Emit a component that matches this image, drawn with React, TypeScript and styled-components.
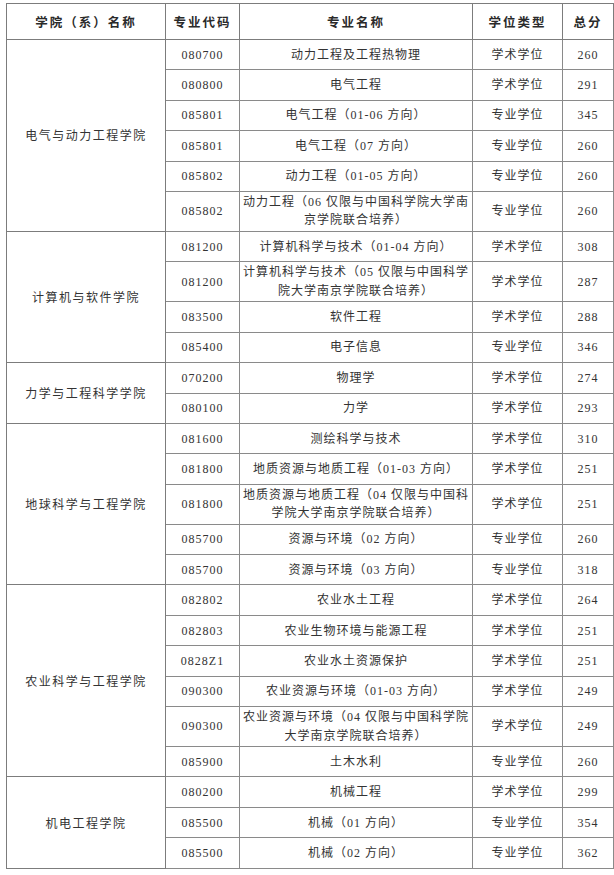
import React from "react";
import styled, { createGlobalStyle } from "styled-components";

interface Major {
    code: string;
    name: React.ReactNode;
    degree: string;
    score: number;
    tall?: boolean;
}

interface School {
    name: string;
    majors: Major[];
}

const schools: School[] = [
    {
        name: "电气与动力工程学院",
        majors: [
            { code: "080700", name: "动力工程及工程热物理", degree: "学术学位", score: 260 },
            { code: "080800", name: "电气工程", degree: "学术学位", score: 291 },
            { code: "085801", name: "电气工程（01-06 方向）", degree: "专业学位", score: 345 },
            { code: "085801", name: "电气工程（07 方向）", degree: "专业学位", score: 260 },
            { code: "085802", name: "动力工程（01-05 方向）", degree: "专业学位", score: 260 },
            {
                code: "085802",
                name: <>动力工程（06 仅限与中国科学院大学南<br />京学院联合培养）</>,
                degree: "专业学位",
                score: 260,
                tall: true,
            },
        ],
    },
    {
        name: "计算机与软件学院",
        majors: [
            { code: "081200", name: "计算机科学与技术（01-04 方向）", degree: "学术学位", score: 308 },
            {
                code: "081200",
                name: <>计算机科学与技术（05 仅限与中国科学<br />院大学南京学院联合培养）</>,
                degree: "学术学位",
                score: 287,
                tall: true,
            },
            { code: "083500", name: "软件工程", degree: "学术学位", score: 288 },
            { code: "085400", name: "电子信息", degree: "专业学位", score: 346 },
        ],
    },
    {
        name: "力学与工程科学学院",
        majors: [
            { code: "070200", name: "物理学", degree: "学术学位", score: 274 },
            { code: "080100", name: "力学", degree: "学术学位", score: 293 },
        ],
    },
    {
        name: "地球科学与工程学院",
        majors: [
            { code: "081600", name: "测绘科学与技术", degree: "学术学位", score: 310 },
            { code: "081800", name: "地质资源与地质工程（01-03 方向）", degree: "学术学位", score: 251 },
            {
                code: "081800",
                name: <>地质资源与地质工程（04 仅限与中国科<br />学院大学南京学院联合培养）</>,
                degree: "学术学位",
                score: 251,
                tall: true,
            },
            { code: "085700", name: "资源与环境（02 方向）", degree: "专业学位", score: 260 },
            { code: "085700", name: "资源与环境（03 方向）", degree: "专业学位", score: 318 },
        ],
    },
    {
        name: "农业科学与工程学院",
        majors: [
            { code: "082802", name: "农业水土工程", degree: "学术学位", score: 264 },
            { code: "082803", name: "农业生物环境与能源工程", degree: "学术学位", score: 251 },
            { code: "0828Z1", name: "农业水土资源保护", degree: "学术学位", score: 251 },
            { code: "090300", name: "农业资源与环境（01-03 方向）", degree: "学术学位", score: 249 },
            {
                code: "090300",
                name: <>农业资源与环境（04 仅限与中国科学院<br />大学南京学院联合培养）</>,
                degree: "学术学位",
                score: 249,
                tall: true,
            },
            { code: "085900", name: "土木水利", degree: "专业学位", score: 260 },
        ],
    },
    {
        name: "机电工程学院",
        majors: [
            { code: "080200", name: "机械工程", degree: "学术学位", score: 299 },
            { code: "085500", name: "机械（01 方向）", degree: "专业学位", score: 354 },
            { code: "085500", name: "机械（02 方向）", degree: "专业学位", score: 362 },
        ],
    },
];

const GlobalStyle = createGlobalStyle`
  body {
    margin: 0;
    background: #ffffff;
    font-family: "Liberation Serif", "Noto Sans CJK SC", serif;
  }
`;

const Page = styled.div`
  padding: 3px 1px 0 6px;
`;

const Table = styled.table`
  border-collapse: collapse;
  table-layout: fixed;
  width: 607px;
  color: #333333;
  font-size: 12px;
  letter-spacing: 1px;
`;

const Col = styled.col<{ $w: number }>`
  width: ${(p) => p.$w}px;
`;

const HeadCell = styled.th`
  height: 35px;
  border: 1px solid #7c7c7c;
  font-weight: 700;
  font-size: 12.5px;
  letter-spacing: 2px;
  color: #2a2a2a;
  text-align: center;
  vertical-align: middle;
  padding: 0;
`;

const Cell = styled.td<{ $tall?: boolean }>`
  height: ${(p) => (p.$tall ? 39 : 29.4)}px;
  border: 1px solid #8a8a8a;
  text-align: center;
  vertical-align: middle;
  padding: 0 2px;
  line-height: ${(p) => (p.$tall ? "18.5px" : "16px")};
  white-space: nowrap;
`;

const SchoolCell = styled.td`
  border: 1px solid #7c7c7c;
  text-align: center;
  vertical-align: middle;
  padding: 0;
  letter-spacing: 1.5px;
`;

export default function App() {
    return (
        <>
            <GlobalStyle />
            <Page>
                <Table>
                    <colgroup>
                        <Col $w={159} />
                        <Col $w={74} />
                        <Col $w={233} />
                        <Col $w={90} />
                        <Col $w={51} />
                    </colgroup>
                    <thead>
                        <tr>
                            <HeadCell>学院（系）名称</HeadCell>
                            <HeadCell>专业代码</HeadCell>
                            <HeadCell>专业名称</HeadCell>
                            <HeadCell>学位类型</HeadCell>
                            <HeadCell>总分</HeadCell>
                        </tr>
                    </thead>
                    <tbody>
                        {schools.map((school) =>
                            school.majors.map((m, i) => (
                                <tr key={school.name + i}>
                                    {i === 0 && (
                                        <SchoolCell rowSpan={school.majors.length}>
                                            {school.name}
                                        </SchoolCell>
                                    )}
                                    <Cell $tall={m.tall}>{m.code}</Cell>
                                    <Cell $tall={m.tall}>{m.name}</Cell>
                                    <Cell $tall={m.tall}>{m.degree}</Cell>
                                    <Cell $tall={m.tall}>{m.score}</Cell>
                                </tr>
                            ))
                        )}
                    </tbody>
                </Table>
            </Page>
        </>
    );
}
